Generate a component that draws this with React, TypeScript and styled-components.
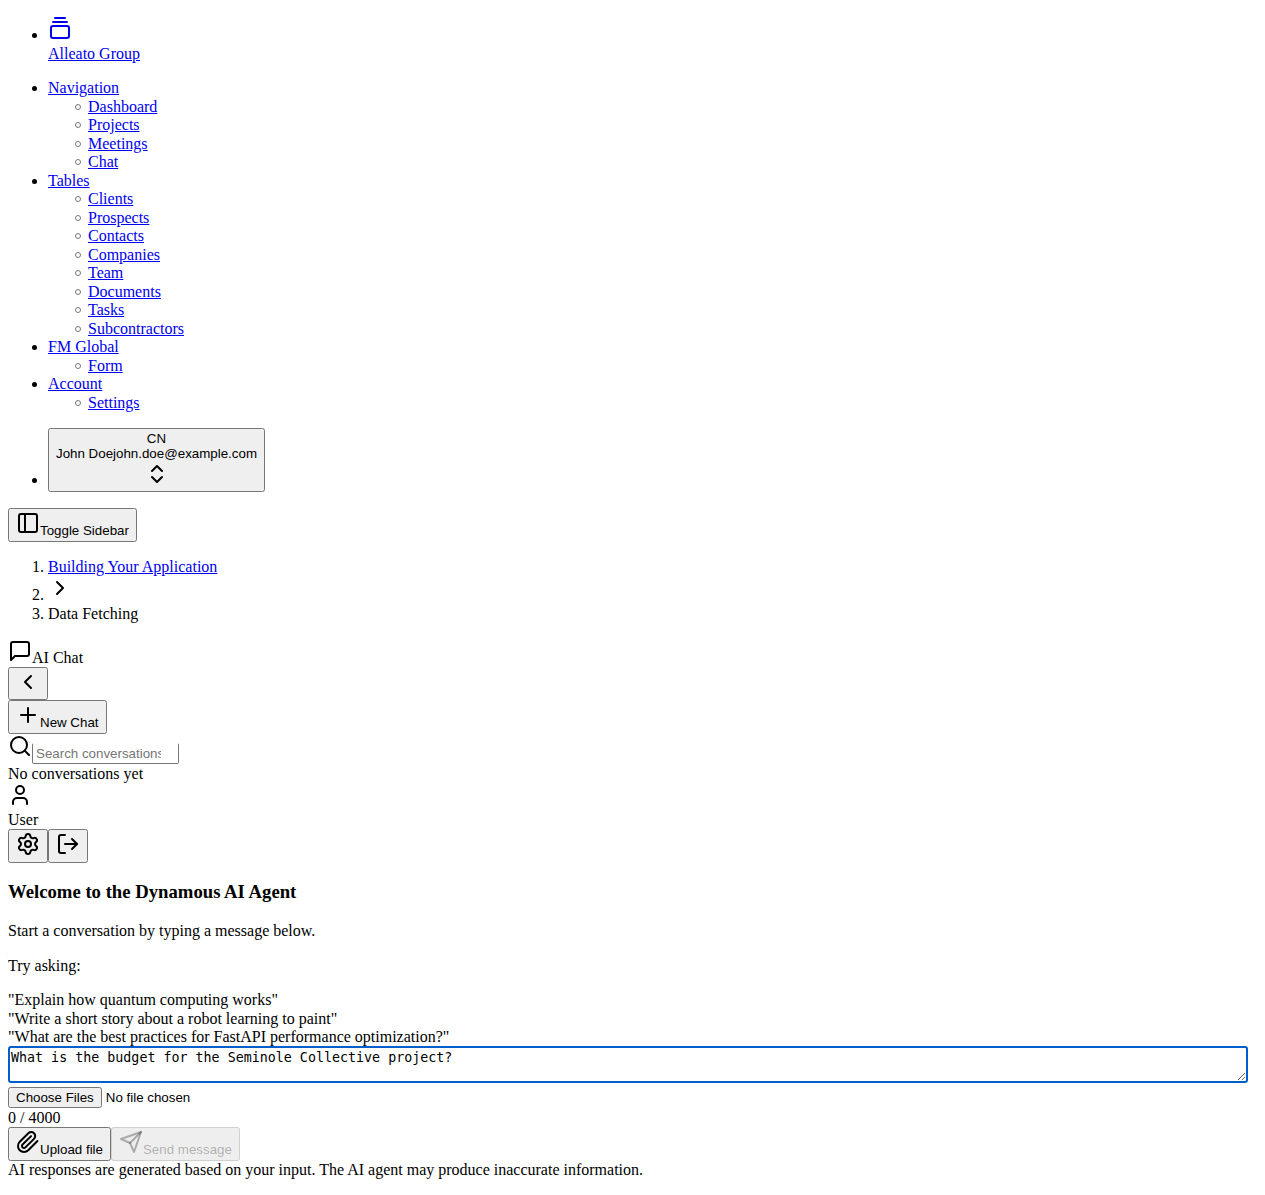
import React from "react";
import styled, { createGlobalStyle } from "styled-components";
import {
  GalleryVerticalEnd, ChevronsUpDown, PanelLeft, ChevronRight, ChevronLeft,
  Plus, Search, User, Settings, LogOut,
} from "lucide-react";

const Global = createGlobalStyle`
  body { margin: 8px 17px 8px 8px; background: #fff; color: #000; font-family: "Liberation Serif", "Times New Roman", serif; font-size: 16px; }
`;
const List = styled.ul<{ $first?: boolean }>`
  margin: ${(p) => (p.$first ? "8px" : "16px")} 0 16px;
  padding-left: 40px;
  line-height: 18.5px;
`;
const SubList = styled.ul`margin: 0; padding-left: 40px; list-style: none;`;
const SubItem = styled.li`
  &::before {
    content: "";
    display: inline-block;
    box-sizing: border-box;
    width: 6px;
    height: 6px;
    margin: 0 7px 2px -13px;
    border: 1px solid #777;
    border-radius: 50%;
  }
`;
const Crumbs = styled.ol`margin: 16px 0; padding-left: 40px; line-height: 18.5px;`;
const Link = styled.a`color: #0000ee; text-decoration: underline; cursor: pointer;`;
const Line = styled.div<{ $height?: number }>`
  height: ${(p) => p.$height ?? 18.5}px;
  line-height: 18.5px;
`;
const Button = styled.button<{ $tall?: boolean }>`
  height: ${(p) => (p.$tall ? 64 : 33.5)}px;
  padding: ${(p) => (p.$tall ? "0 6px 2px" : "1px 6px")};
  font-family: "Liberation Sans", Arial, sans-serif;
  font-size: 13.333px;
`;
const ProfileIcon = styled(ChevronsUpDown)`margin: 1px 0 -1px 1px;`;
const Profile = styled.li`height: 64px;`;
const FileField = styled.input`font-family: "Liberation Sans", Arial, sans-serif; font-size: 13.333px;`;
const SearchField = styled.input`
  box-sizing: border-box;
  width: 147px;
  height: 21px;
  padding: 1px 4px 1px 3px;
  border: 1px solid #767676;
  border-top-color: transparent;
  border-radius: 2px;
  font-family: "Liberation Sans", Arial, sans-serif;
  font-size: 13.333px;
`;
const Title = styled.h3`margin: 18.7px 0 19.5px; font-size: 18.72px; line-height: 21.5px;`;
const Text = styled.p`margin: 16px 0; line-height: 18.5px;`;
const Message = styled.textarea`
  display: block;
  width: 100%;
  height: 37.5px;
  margin: -1px 0 4px;
  box-sizing: border-box;
  padding: 2px 1px 1px;
  border: 2px solid #005fcc;
  border-radius: 3px;
  outline: none;
  font-family: "DejaVu Sans Mono", monospace;
  font-size: 13.333px;
`;

const Icon = ({ children }: { children: React.ReactNode }) => (
  <svg width="24" height="24" viewBox="0 0 24 24" fill="none" stroke="currentColor" strokeWidth="2" strokeLinecap="round" strokeLinejoin="round">
    {children}
  </svg>
);
const MessageIcon = () => <Icon><path d="M21 15a2 2 0 0 1-2 2H7l-4 4V5a2 2 0 0 1 2-2h14a2 2 0 0 1 2 2z" /></Icon>;
const ClipIcon = () => <Icon><path d="m21.44 11.05-9.19 9.19a6 6 0 0 1-8.49-8.49l8.57-8.57A4 4 0 1 1 18 8.84l-8.59 8.57a2 2 0 0 1-2.83-2.83l8.49-8.48" /></Icon>;
const SendIcon = () => <Icon><path d="m22 2-7 20-4-9-9-4Z" /><path d="M22 2 11 13" /></Icon>;

const groups = [
  { name: "Navigation", items: ["Dashboard", "Projects", "Meetings", "Chat"] },
  { name: "Tables", items: ["Clients", "Prospects", "Contacts", "Companies", "Team", "Documents", "Tasks", "Subcontractors"] },
  { name: "FM Global", items: ["Form"] },
  { name: "Account", items: ["Settings"] },
];

export default function App() {
  return (
    <>
      <Global />
      <List $first><li><Link href="#"><GalleryVerticalEnd /><div>Alleato Group</div></Link></li></List>
      <List>
        {groups.map((g) => (
          <li key={g.name}><Link href="#">{g.name}</Link>
            <SubList>{g.items.map((i) => <SubItem key={i}><Link href="#">{i}</Link></SubItem>)}</SubList>
          </li>
        ))}
      </List>
      <List><Profile><Button $tall><div>CN</div><div>John Doejohn.doe@example.com</div><ProfileIcon /></Button></Profile></List>
      <Line $height={33.5}><Button><PanelLeft />Toggle Sidebar</Button></Line>
      <Crumbs><li><Link href="#">Building Your Application</Link></li><li><ChevronRight /></li><li>Data Fetching</li></Crumbs>
      <Line $height={27.5}><MessageIcon />AI Chat</Line>
      <Line $height={33.5}><Button><ChevronLeft /></Button></Line>
      <Line $height={33.5}><Button><Plus />New Chat</Button></Line>
      <Line $height={31}><Search /><SearchField type="search" placeholder="Search conversations..." /></Line>
      <Line>No conversations yet</Line>
      <Line $height={27.5}><User /></Line>
      <Line>User</Line>
      <Line $height={33.5}><Button><Settings /></Button><Button><LogOut /></Button></Line>
      <Title>Welcome to the Dynamous AI Agent</Title>
      <Text>Start a conversation by typing a message below.</Text>
      <Text>Try asking:</Text>
      <Line>"Explain how quantum computing works"</Line>
      <Line>"Write a short story about a robot learning to paint"</Line>
      <Line>"What are the best practices for FastAPI performance optimization?"</Line>
      <Message defaultValue="What is the budget for the Seminole Collective project?" />
      <Line $height={21.5}><FileField type="file" multiple /></Line>
      <Line>0 / 4000</Line>
      <Line $height={33.5}><Button><ClipIcon />Upload file</Button><Button disabled><SendIcon />Send message</Button></Line>
      <Line>AI responses are generated based on your input. The AI agent may produce inaccurate information.</Line>
    </>
  );
}
